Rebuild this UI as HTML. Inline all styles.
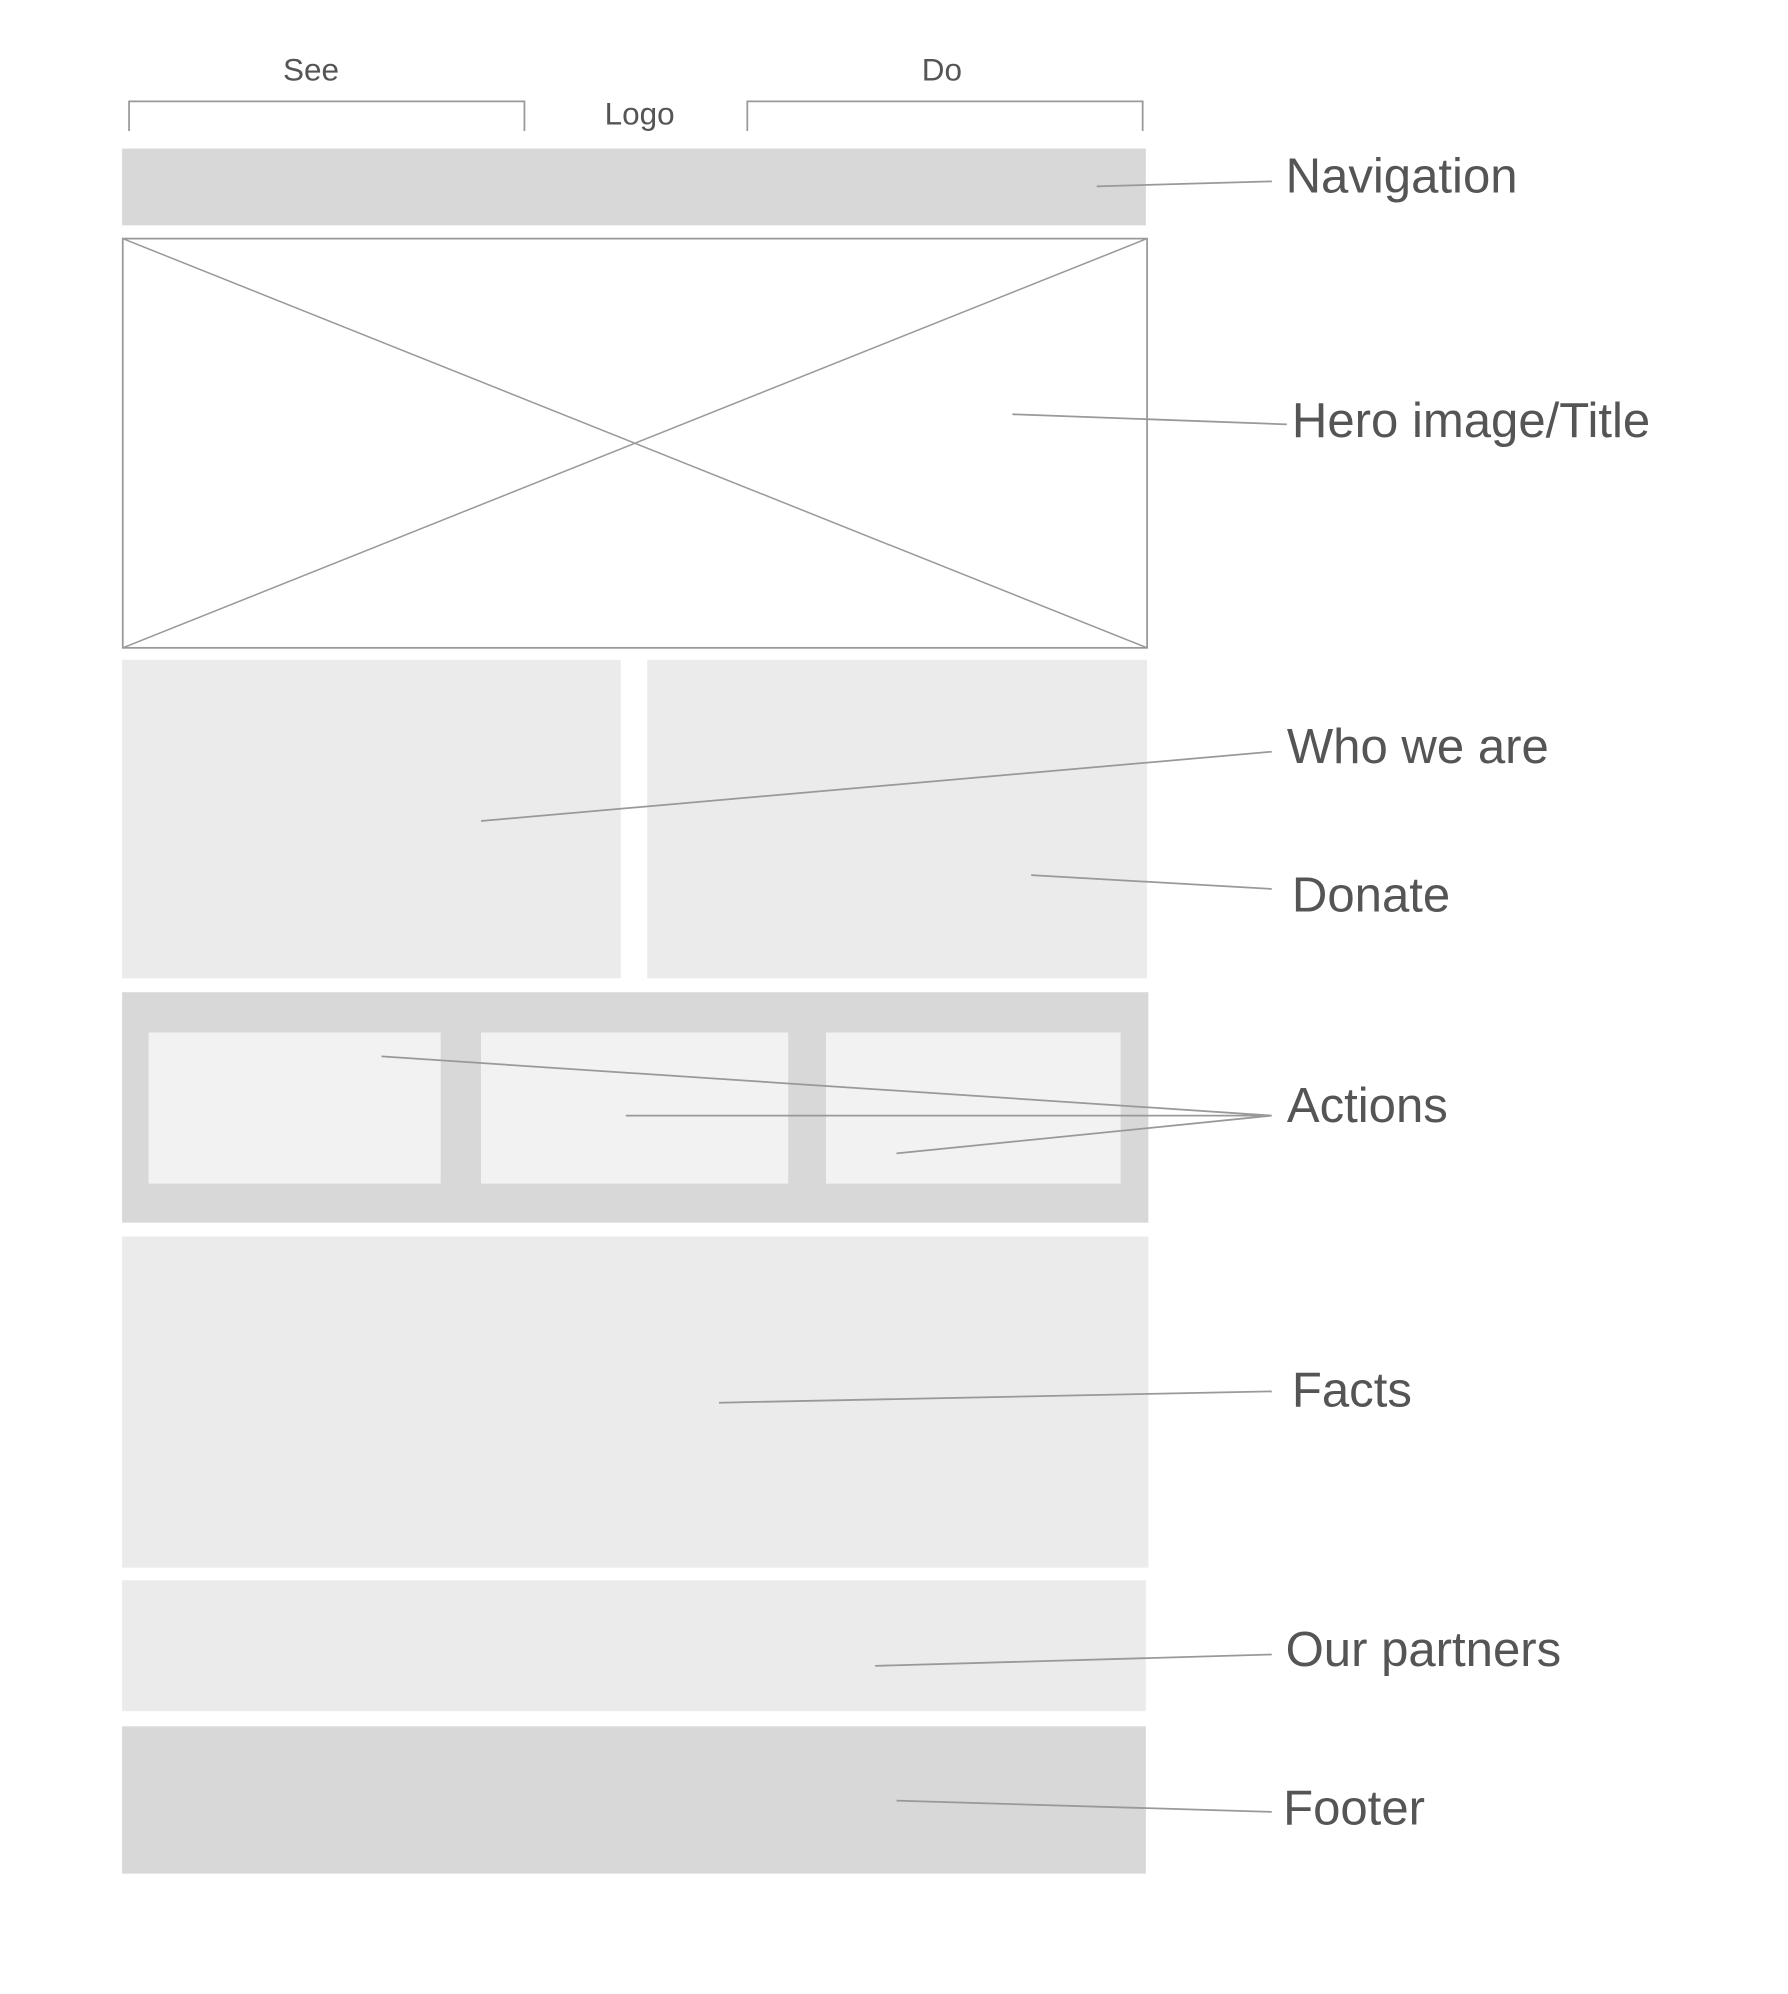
<!DOCTYPE html>
<html><head><meta charset="utf-8"><style>
html,body{margin:0;padding:0;background:#fff;}
svg{display:block;}
text{font-family:"Liberation Sans",sans-serif;fill:#555;}
</style></head><body>
<svg width="1788" height="1994" viewBox="0 0 1420 1583.6" preserveAspectRatio="none" xmlns="http://www.w3.org/2000/svg">
<rect x="0" y="0" width="1420" height="1583.6" fill="#fff"/>
<text x="247" y="64" font-size="25" text-anchor="middle">See</text>
<text x="748" y="64" font-size="25" text-anchor="middle">Do</text>
<text x="508" y="99" font-size="25" text-anchor="middle">Logo</text>
<path d="M102.5 104V80.5H416.5V104" fill="none" stroke="#999" stroke-width="1.4"/>
<path d="M593.5 104V80.5H907.5V104" fill="none" stroke="#999" stroke-width="1.4"/>
<rect x="97" y="118" width="813" height="61" fill="#d8d8d8"/>
<rect x="97.5" y="189.5" width="813.5" height="325" fill="#fff" stroke="#999" stroke-width="1.4"/>
<path d="M97.5 189.5L911 514.5M911 189.5L97.5 514.5" stroke="#999" stroke-width="1.2"/>
<rect x="97" y="524" width="396" height="253" fill="#ebebeb"/>
<rect x="514" y="524" width="397" height="253" fill="#ebebeb"/>
<rect x="97" y="788" width="815" height="183" fill="#d8d8d8"/>
<rect x="118" y="820" width="232" height="120" fill="#f2f2f2"/>
<rect x="382" y="820" width="244" height="120" fill="#f2f2f2"/>
<rect x="656" y="820" width="234" height="120" fill="#f2f2f2"/>
<rect x="97" y="982" width="815" height="263" fill="#ebebeb"/>
<rect x="97" y="1255" width="813" height="104" fill="#ebebeb"/>
<rect x="97" y="1371" width="813" height="117" fill="#d8d8d8"/>
<g stroke="#999" stroke-width="1.4" fill="none">
<path d="M871 148L1010 144"/>
<path d="M804 329L1022 337"/>
<path d="M382 652L1010 597"/>
<path d="M819 695L1010 706"/>
<path d="M303 839L1010 886M497 886L1010 886M712 916L1010 886"/>
<path d="M571 1114L1010 1105"/>
<path d="M695 1323L1010 1314"/>
<path d="M712 1430L1010 1439"/>
</g>
<g font-size="39">
<text x="1021" y="153">Navigation</text>
<text x="1026" y="347">Hero image/Title</text>
<text x="1022" y="606">Who we are</text>
<text x="1026" y="724">Donate</text>
<text x="1022" y="891">Actions</text>
<text x="1026" y="1117">Facts</text>
<text x="1021" y="1323">Our partners</text>
<text x="1019" y="1449">Footer</text>
</g>
</svg>
</body></html>
